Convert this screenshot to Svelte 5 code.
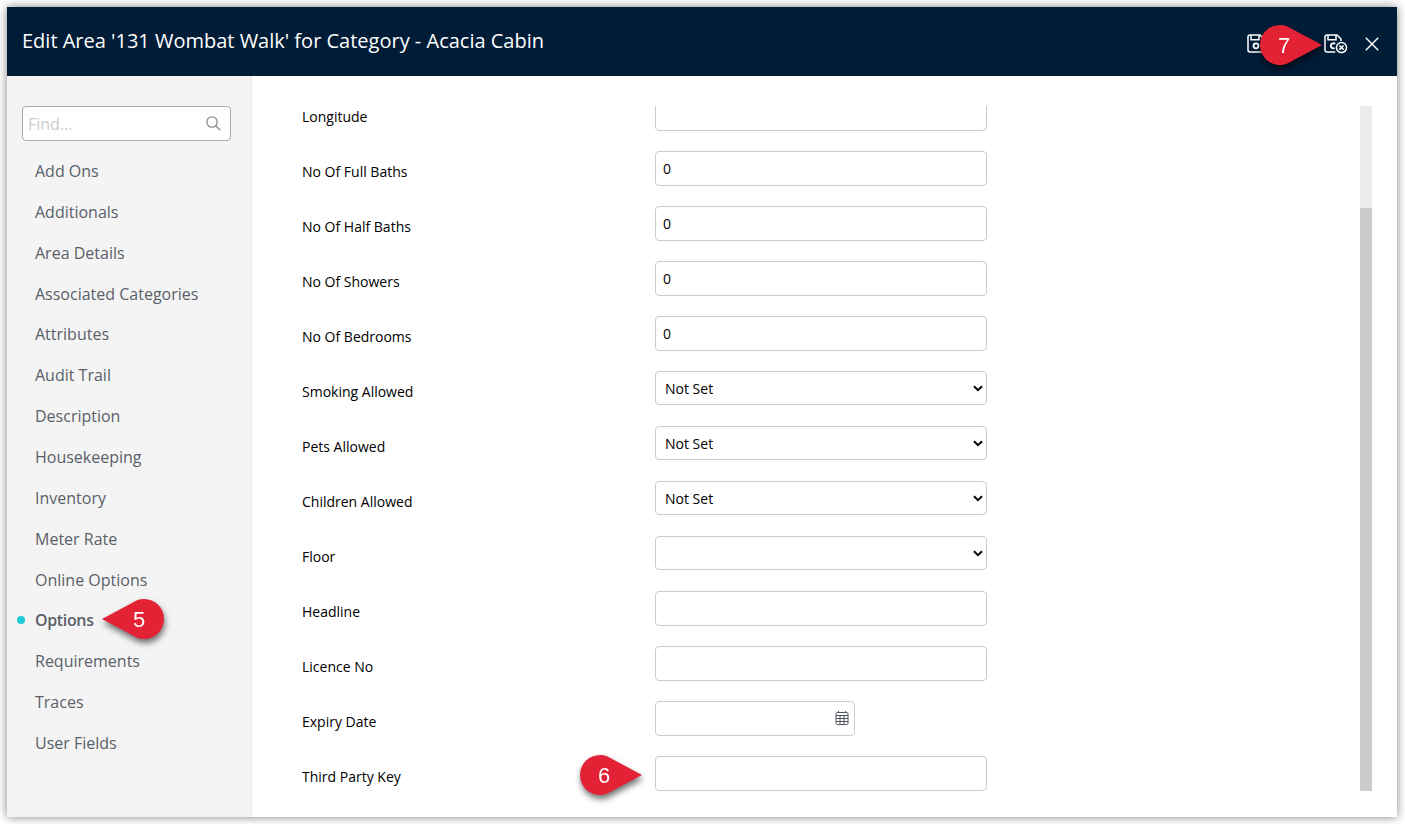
<script lang="ts">
  interface Field {
    label: string;
    type: 'text' | 'select' | 'date';
    value: string;
  }

  interface Marker {
    step: number;
    x: number;
    y: number;
    pointsLeft: boolean;
  }

  const sections = [
    'Add Ons',
    'Additionals',
    'Area Details',
    'Associated Categories',
    'Attributes',
    'Audit Trail',
    'Description',
    'Housekeeping',
    'Inventory',
    'Meter Rate',
    'Online Options',
    'Options',
    'Requirements',
    'Traces',
    'User Fields',
  ];

  const markers: Marker[] = [
    { step: 5, x: 102, y: 599, pointsLeft: true },
    { step: 6, x: 580, y: 755, pointsLeft: false },
    { step: 7, x: 1260, y: 25, pointsLeft: false },
  ];

  let fields: Field[] = $state([
    { label: 'Longitude', type: 'text', value: '' },
    { label: 'No Of Full Baths', type: 'text', value: '0' },
    { label: 'No Of Half Baths', type: 'text', value: '0' },
    { label: 'No Of Showers', type: 'text', value: '0' },
    { label: 'No Of Bedrooms', type: 'text', value: '0' },
    { label: 'Smoking Allowed', type: 'select', value: 'Not Set' },
    { label: 'Pets Allowed', type: 'select', value: 'Not Set' },
    { label: 'Children Allowed', type: 'select', value: 'Not Set' },
    { label: 'Floor', type: 'select', value: '' },
    { label: 'Headline', type: 'text', value: '' },
    { label: 'Licence No', type: 'text', value: '' },
    { label: 'Expiry Date', type: 'date', value: '' },
    { label: 'Third Party Key', type: 'text', value: '' },
  ]);

  let active = $state('Options');
  let search = $state('');

  function optionsFor(field: Field): string[] {
    return field.label === 'Floor' ? [''] : ['Not Set', 'Yes', 'No'];
  }
</script>

<div class="dialog">
  <header class="header">
    <h1>Edit Area '131 Wombat Walk' for Category - Acacia Cabin</h1>
    <div class="actions">
      <button class="save" aria-label="Save">
        <svg width="18" height="19" viewBox="0 0 18 19">
          <path d="M3 1H13L17 5V16Q17 18 15 18H3Q1 18 1 16V3Q1 1 3 1Z" />
          <path d="M4 1V5.7H12V1" />
          <circle cx="9" cy="11.8" r="2.5" stroke-width="1.8" />
        </svg>
      </button>
      <button class="save-exit" aria-label="Save and exit">
        <svg width="24" height="20" viewBox="0 0 24 20">
          <path d="M11.3 18H3Q1 18 1 16V3Q1 1 3 1H13L17 5V7" />
          <path d="M4 1V5.7H12V1" />
          <path d="M11.2 9.9Q10.2 9.1 9 9.3Q6.8 9.8 6.8 11.8Q6.8 13.8 9 14.3Q10 14.5 10.8 14" stroke-width="1.8" />
          <circle cx="17.5" cy="13.6" r="5" />
          <path d="M15.4 11.5L19.6 15.7M19.6 11.5L15.4 15.7" stroke-width="1.7" />
        </svg>
      </button>
      <button class="close" aria-label="Close">
        <svg width="14" height="14" viewBox="0 0 14 14">
          <path d="M0.8 0.8L13.2 13.2M13.2 0.8L0.8 13.2" />
        </svg>
      </button>
    </div>
  </header>

  <div class="body">
    <aside class="sidebar">
      <div class="search">
        <input placeholder="Find..." bind:value={search} />
        <svg width="15" height="15" viewBox="0 0 15 15">
          <circle cx="6" cy="6" r="5.2" />
          <path d="M9.8 9.8L14.3 14.3" />
        </svg>
      </div>
      <nav>
        {#each sections as section}
          <button class="nav-item" class:active={section === active} onclick={() => active = section}>
            {section}
          </button>
        {/each}
      </nav>
    </aside>

    <main class="content">
      <div class="fields">
        {#each fields as field}
          <label class="row">
            <span class="label">{field.label}</span>
            {#if field.type === 'select'}
              <span class="control select">
                <select bind:value={field.value}>
                  {#each optionsFor(field) as option}
                    <option>{option}</option>
                  {/each}
                </select>
                <svg width="10" height="7" viewBox="0 0 10 7">
                  <path d="M1 1.2L5 5.2L9 1.2" />
                </svg>
              </span>
            {:else if field.type === 'date'}
              <span class="control date">
                <input bind:value={field.value} />
                <svg width="14" height="14" viewBox="0 0 14 14">
                  <rect x="1" y="1.5" width="12" height="12" rx="1.3" />
                  <path d="M1 4.5H13M1 7.5H13M1 10.5H13M5 4.5V13.5M9 4.5V13.5M3.5 0V2M10.5 0V2" />
                </svg>
              </span>
            {:else}
              <span class="control">
                <input bind:value={field.value} />
              </span>
            {/if}
          </label>
        {/each}
      </div>
      <div class="scrollbar"><div class="thumb"></div></div>
    </main>
  </div>
</div>

{#each markers as marker}
  <div class="marker" class:left={marker.pointsLeft} style="left: {marker.x}px; top: {marker.y}px">
    <svg width="62" height="40" viewBox="0 0 62 40">
      <path d="M62 20L33 35.5C29 38 25 40 20 40A20 20 0 0 1 20 0C25 0 29 2 33 4.5Z" />
    </svg>
    <span>{marker.step}</span>
  </div>
{/each}

<style>
  :global(body) { background: #fff; overflow: hidden; }

  .dialog {
    width: 1390px; height: 810px; margin: 7px;
    display: flex; flex-direction: column;
    background: #fff; box-shadow: 0 0 9px rgba(0, 0, 0, 0.5);
    font-family: 'Open Sans', sans-serif;
  }
  button { background: none; border: none; padding: 0; cursor: pointer; font-family: inherit; }
  svg { display: block; fill: none; stroke: currentColor; }

  .header {
    height: 69px; flex-shrink: 0; box-sizing: border-box; padding: 0 18px 0 15px;
    display: flex; align-items: center; justify-content: space-between;
    background: #001c36; color: #fff;
  }
  h1 { margin: 0 0 2px; font-size: 20px; font-weight: 400; line-height: 28px; }
  .actions { display: flex; align-items: flex-start; padding-top: 4px; }
  .actions button { color: #fff; }
  .actions svg { stroke-width: 1.5; }
  .save { margin-right: 59px; }
  .save-exit { margin-right: 17px; }
  .close { padding-top: 3px; }

  .body { flex: 1; display: flex; min-height: 0; }

  .sidebar {
    width: 245px; box-sizing: border-box; flex-shrink: 0; padding: 30px 20px 0 15px;
    background: #f4f4f4; border-right: 1px solid #e9e9e9;
  }
  .search {
    height: 35px; box-sizing: border-box; padding: 0 9px 0 5px;
    display: flex; align-items: center;
    background: #fff; border: 1px solid #aaa; border-radius: 4px; color: #8c8c8c;
  }
  .search svg { flex-shrink: 0; stroke-width: 1.3; }
  .search input {
    flex: 1; min-width: 0; border: none; outline: none; padding: 0;
    background: none; font: 16px 'Open Sans', sans-serif;
  }
  .search input::placeholder { color: #ccc; opacity: 1; }

  nav { display: flex; flex-direction: column; padding-top: 9.58px; }
  .nav-item {
    position: relative; height: 40.86px; padding-left: 13px;
    color: #5a5f69; font-size: 16px; text-align: left;
  }
  .nav-item.active { font-weight: 600; letter-spacing: -0.35px; }
  .nav-item.active::before {
    content: ''; position: absolute; left: -5px; top: 16.4px;
    width: 8px; height: 8px; border-radius: 50%; background: #1fcbd6;
  }

  .content { flex: 1; display: flex; justify-content: space-between; padding: 30px 25px 26px 50px; }
  /* scrolled part way, the first row is cut at the top */
  .fields {
    flex: 1; overflow: hidden; display: flex; flex-direction: column; justify-content: flex-end;
  }
  .row {
    height: 55px; flex-shrink: 0; display: flex; align-items: flex-start;
    color: #000; font-size: 14px;
  }
  .row:last-child { height: 35px; }
  .label { width: 353px; line-height: 19px; padding-top: 11px; }
  .control {
    width: 332px; height: 35px; box-sizing: border-box;
    display: flex; align-items: center;
    border: 1px solid #ccc; border-radius: 4px; background: #fff;
  }
  .control input, .control select {
    flex: 1; min-width: 0; height: 100%; padding: 0 7px; border: none; outline: none;
    appearance: none; background: none; color: #000; font: 14px 'Open Sans', sans-serif;
  }
  .control.select { height: 34px; padding-right: 3px; }
  .control.select select { padding: 0 9px; }
  .control.select svg { color: #000; stroke-width: 2; }
  .control.date { width: 200px; padding-right: 5px; }
  .control.date svg { color: #50545c; margin-bottom: 1px; }

  .scrollbar { width: 12px; background: #ebebeb; display: flex; align-items: flex-end; }
  .thumb { width: 100%; height: 583px; background: #cbcbcb; }

  .marker {
    position: absolute; width: 62px; height: 40px;
    color: #fff; font: 22px 'Liberation Sans', Arial, sans-serif;
    filter: drop-shadow(1px 4px 3px rgba(0, 0, 0, 0.55));
  }
  .marker svg { fill: #e42236; stroke: none; }
  .marker.left svg { transform: scaleX(-1); }
  .marker span { position: absolute; left: 18px; top: 8px; line-height: 25px; }
  .marker.left span { left: 31px; }
</style>
